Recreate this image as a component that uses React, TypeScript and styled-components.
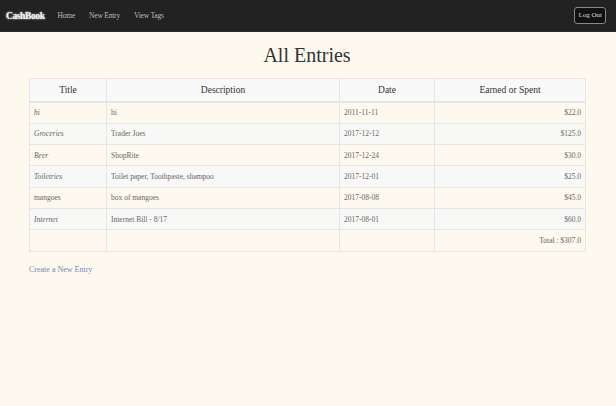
import React from "react";
import styled, { createGlobalStyle, css } from "styled-components";

const GlobalStyle = createGlobalStyle`
  html, body {
    margin: 0;
    padding: 0;
    background: #fdf9ee;
    font-family: "Liberation Serif", "DejaVu Serif", serif;
    color: #555;
  }
`;

const NavBar = styled.nav`
  height: 31px;
  background: #222;
  border-bottom: 1px solid #2c2c2c;
  display: flex;
  align-items: center;
  padding: 0 10px 0 6px;
`;

const Brand = styled.a`
  color: #f4f4f4;
  font-size: 9.5px;
  font-weight: bold;
  letter-spacing: -0.4px;
  text-shadow: 0 0 2px #fff;
  margin-right: 13px;
`;

const NavLink = styled.a`
  color: #bbb;
  font-size: 7.5px;
  letter-spacing: -0.2px;
  margin-right: 14px;
`;

const LogOut = styled.button`
  margin-left: auto;
  background: #111;
  color: #ddd;
  border: 1px solid #888;
  border-radius: 3px;
  font-family: inherit;
  font-size: 7px;
  padding: 3px 3px;
  line-height: 9px;
`;

const Main = styled.main`
  padding: 0 31px 0 29px;
`;

const Heading = styled.h1`
  margin: 11px 0 11px;
  text-align: center;
  font-weight: normal;
  font-size: 20px;
  line-height: 24px;
  color: #333;
`;

const Table = styled.table`
  width: 100%;
  table-layout: fixed;
  border-collapse: collapse;
  border: 1px solid #e6e6e6;
  font-size: 7.5px;
`;

const HeadCell = styled.th<{ w: number }>`
  box-sizing: border-box;
  width: ${(p) => p.w}px;
  height: 23px;
  padding: 0;
  font-size: 9.5px;
  font-weight: normal;
  color: #333;
  background: #f9f9f9;
  border: 1px solid #e6e6e6;
  border-bottom-width: 2px;
`;

const Row = styled.tr<{ striped: boolean }>`
  background: ${(p) => (p.striped ? "#f8f8f6" : "#fdf9ee")};
`;

const Cell = styled.td<{ italic?: boolean; right?: boolean }>`
  height: 20.3px;
  padding: 0 4px;
  border: 1px solid #e6e6e6;
  color: #666;
  ${(p) =>
    p.italic &&
    css`
      font-style: italic;
    `};
  ${(p) =>
    p.right &&
    css`
      text-align: right;
    `};
`;

const CreateLink = styled.a`
  display: block;
  margin-top: 13px;
  color: #7a88ad;
  font-size: 8px;
`;

const entries = [
  { title: "hi", italic: true, desc: "hi", date: "2011-11-11", amount: "$22.0" },
  { title: "Groceries", italic: true, desc: "Trader Joes", date: "2017-12-12", amount: "$125.0" },
  { title: "Beer", italic: true, desc: "ShopRite", date: "2017-12-24", amount: "$30.0" },
  { title: "Toiletries", italic: true, desc: "Toilet paper, Toothpaste, shampoo", date: "2017-12-01", amount: "$25.0" },
  { title: "mangoes", italic: false, desc: "box of mangoes", date: "2017-08-08", amount: "$45.0" },
  { title: "Internet", italic: true, desc: "Internet Bill - 8/17", date: "2017-08-01", amount: "$60.0" },
];

export default function App() {
  return (
    <>
      <GlobalStyle />
      <NavBar>
        <Brand>CashBook</Brand>
        <NavLink>Home</NavLink>
        <NavLink>New Entry</NavLink>
        <NavLink>View Tags</NavLink>
        <LogOut>Log Out</LogOut>
      </NavBar>
      <Main>
        <Heading>All Entries</Heading>
        <Table>
          <thead>
            <tr>
              <HeadCell w={77}>Title</HeadCell>
              <HeadCell w={233}>Description</HeadCell>
              <HeadCell w={95}>Date</HeadCell>
              <HeadCell w={151}>Earned or Spent</HeadCell>
            </tr>
          </thead>
          <tbody>
            {entries.map((e, i) => (
              <Row key={e.title} striped={i % 2 === 1}>
                <Cell italic={e.italic}>{e.title}</Cell>
                <Cell>{e.desc}</Cell>
                <Cell>{e.date}</Cell>
                <Cell right>{e.amount}</Cell>
              </Row>
            ))}
            <Row striped={false}>
              <Cell />
              <Cell />
              <Cell />
              <Cell right>Total : $307.0</Cell>
            </Row>
          </tbody>
        </Table>
        <CreateLink>Create a New Entry</CreateLink>
      </Main>
    </>
  );
}
